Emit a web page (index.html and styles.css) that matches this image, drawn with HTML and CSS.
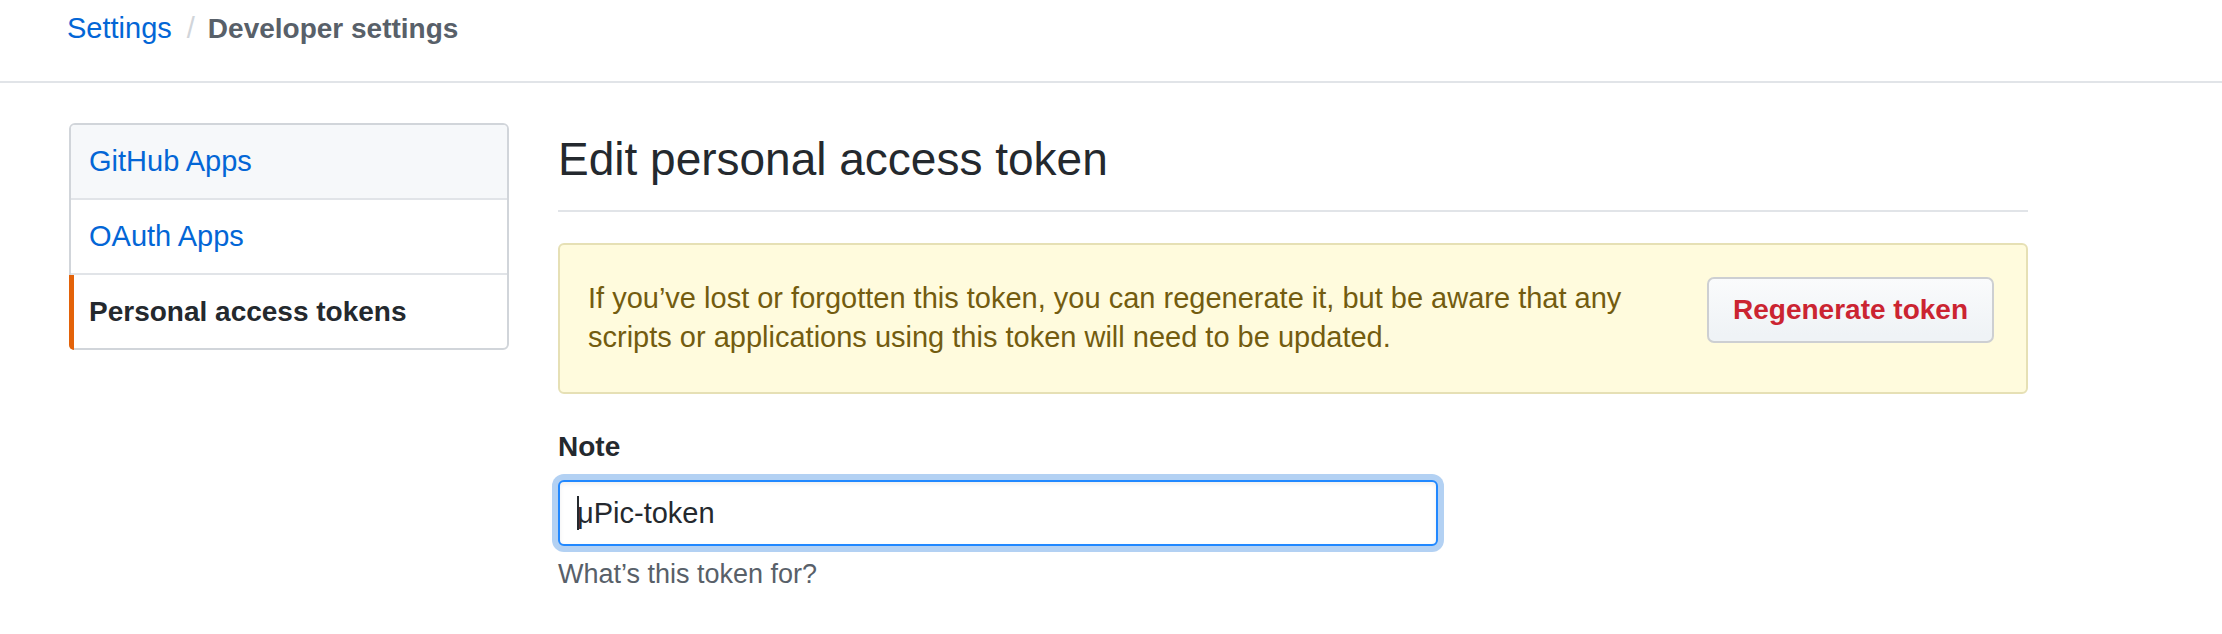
FILE: index.html
```html
<!DOCTYPE html>
<html lang="en">
<head>
<meta charset="utf-8">
<title>Edit personal access token</title>
<link rel="stylesheet" href="styles.css">
</head>
<body>
<header class="breadcrumb">
  <a class="crumb-link" href="#">Settings</a><span class="crumb-sep">/</span><strong class="crumb-current">Developer settings</strong>
</header>
<main class="layout">
  <nav class="sidebar">
    <a class="menu-item menu-item-hover" href="#">GitHub Apps</a>
    <a class="menu-item" href="#">OAuth Apps</a>
    <a class="menu-item menu-item-selected" href="#">Personal access tokens</a>
  </nav>
  <section class="content">
    <h1 class="subhead">Edit personal access token</h1>
    <div class="flash">
      <p class="flash-text">If you’ve lost or forgotten this token, you can regenerate it, but be aware that any scripts or applications using this token will need to be updated.</p>
      <button class="btn-danger" type="button">Regenerate token</button>
    </div>
    <div class="form-group">
      <label class="form-label">Note</label>
      <div class="form-control"><span class="caret"></span>μPic-token</div>
      <p class="note">What’s this token for?</p>
    </div>
  </section>
</main>
</body>
</html>
```

FILE: styles.css
```css
html, body {
  margin: 0;
  padding: 0;
  background: #ffffff;
}

body {
  font-family: "Liberation Sans", Arial, Helvetica, sans-serif;
  color: #24292e;
}

a {
  text-decoration: none;
}

.breadcrumb {
  padding: 8px 0 32px 67px;
  border-bottom: 2px solid #e1e4e8;
  font-size: 29px;
  line-height: 40px;
  display: flex;
  align-items: baseline;
}

.crumb-link {
  color: #0366d6;
}

.crumb-sep {
  color: #d1d5da;
  padding: 0 13px 0 15px;
}

.crumb-current {
  color: #586069;
  font-weight: bold;
  font-size: 28px;
}

.layout {
  display: flex;
  align-items: flex-start;
  gap: 49px;
  margin: 40px 0 0 69px;
}

.sidebar {
  width: 440px;
  flex-shrink: 0;
  box-sizing: border-box;
  border: 2px solid #d1d5da;
  border-radius: 6px;
  display: flex;
  flex-direction: column;
}

.menu-item {
  position: relative;
  display: block;
  height: 73px;
  line-height: 73px;
  padding-left: 18px;
  font-size: 29px;
  color: #0366d6;
  border-top: 2px solid #e1e4e8;
}

.menu-item:first-child {
  border-top: 0;
  border-radius: 4px 4px 0 0;
}

.menu-item-hover {
  background: #f6f8fa;
}

.menu-item-selected {
  color: #24292e;
  font-weight: bold;
  font-size: 28px;
}

.menu-item-selected::before {
  content: "";
  position: absolute;
  left: -2px;
  top: 0;
  bottom: -2px;
  width: 5px;
  background: #e36209;
  border-bottom-left-radius: 6px;
}

.content {
  width: 1470px;
  flex-shrink: 0;
}

.subhead {
  margin: 7px 0 0;
  padding-bottom: 22px;
  border-bottom: 2px solid #e1e4e8;
  font-size: 46px;
  line-height: 58px;
  font-weight: normal;
  color: #24292e;
}

.flash {
  margin-top: 31px;
  display: flex;
  align-items: flex-start;
  padding: 34px 32px 35px 28px;
  border: 2px solid #e6e0b5;
  border-radius: 6px;
  background: #fffbdd;
}

.flash-text {
  flex: 1;
  margin: 0;
  font-size: 29px;
  line-height: 39px;
  color: #735c0f;
}

.btn-danger {
  flex-shrink: 0;
  margin: -2px 0 0 48px;
  height: 66px;
  padding: 0 24px;
  border: 2px solid #cdcfd2;
  border-radius: 7px;
  background: linear-gradient(180deg, #fafbfc 0%, #eff3f6 90%);
  color: #cb2431;
  font-family: "Liberation Sans", Arial, Helvetica, sans-serif;
  font-size: 28px;
  font-weight: bold;
}

.form-group {
  margin-top: 34px;
}

.form-label {
  display: block;
  font-size: 28px;
  font-weight: bold;
  line-height: 38px;
  color: #24292e;
}

.form-control {
  margin-top: 14px;
  width: 880px;
  height: 66px;
  box-sizing: border-box;
  display: flex;
  align-items: center;
  padding-left: 17px;
  border: 2px solid #2188ff;
  border-radius: 6px;
  background: #ffffff;
  box-shadow: inset 0 2px 4px rgba(27, 31, 35, 0.075), 0 0 0 6px rgba(3, 102, 214, 0.3);
  font-size: 29px;
  color: #24292e;
}

.caret {
  display: inline-block;
  width: 2px;
  height: 34px;
  background: #24292e;
  margin-right: -2px;
}

.note {
  margin: 9px 0 0;
  font-size: 27px;
  line-height: 38px;
  color: #586069;
}
```
